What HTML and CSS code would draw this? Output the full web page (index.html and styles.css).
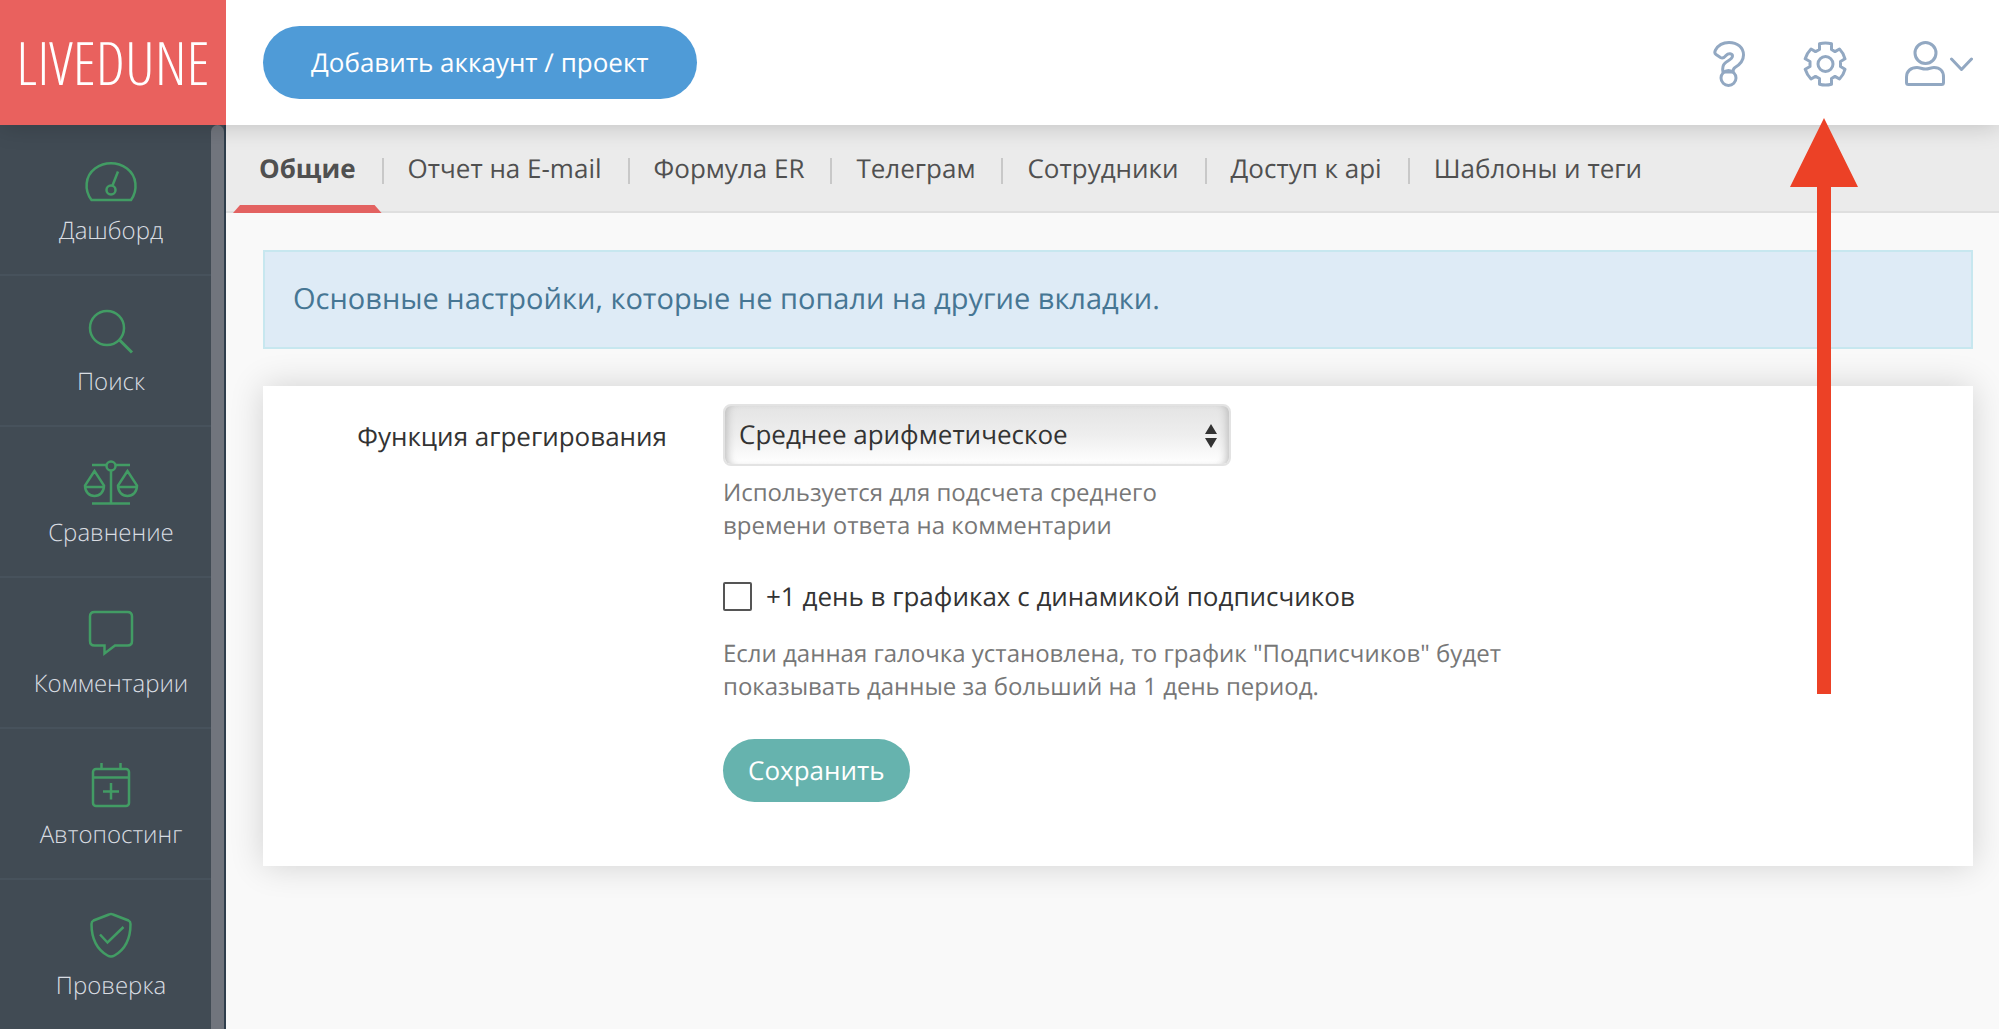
FILE: index.html
```html
<!DOCTYPE html>
<html lang="ru">
<head>
<meta charset="utf-8">
<meta name="viewport" content="width=device-width, initial-scale=1">
<title>LiveDune — Настройки</title>
<link rel="stylesheet" href="styles.css">
</head>
<body>
<div class="app">
  <header class="header">
    <a class="logo" href="#">LIVEDUNE</a>
    <button class="btn btn-add" type="button">Добавить аккаунт / проект</button>
    <nav class="tools" aria-label="Профиль">
      <a class="tool" href="#" aria-label="Помощь">
        <svg width="32" height="46" viewBox="0 0 32 46"><path d="M2.500 9C5 4.500 10 1.500 16 1.500C24.500 1.500 30.500 6.500 30.500 14C30.500 20 27 23.500 22 26.500C20.500 27.500 20 28.500 20 31H10C9 26 10.500 22.500 14 20.500C17.500 18.500 19.500 17.500 19.500 15C19.500 12.500 15.500 11.500 13 14.500C11 17 9.500 17.500 7.500 16.500L3 13.500C1.500 12.500 1.500 11 2.500 9Z"/><circle cx="15.500" cy="37" r="7.500"/></svg>
      </a>
      <a class="tool" href="#" aria-label="Настройки">
        <svg width="44" height="46" viewBox="0 0 44 46"><path d="M16.500 2.800Q22.500 1.200 28.500 2.800V8.500L32 10.600L36.500 8Q40.500 12 42 17.800L37.500 20.500V25.500L42 28.300Q40.500 34 36.500 38L32 35.400L28.500 37.500V43.200Q22.500 44.800 16.500 43.200V37.500L12.500 35.400L8 38Q4 34 2.200 28.300L7 25.500V20.500L2.200 17.800Q4 12 8 8L12.500 10.600L16.500 8.500Z"/><circle cx="22.500" cy="23" r="7.500"/></svg>
      </a>
      <a class="tool" href="#" aria-label="Аккаунт">
        <svg width="68" height="46" viewBox="0 0 68 46"><circle cx="20.500" cy="12" r="10.500"/><path d="M1.500 41.500V36C1.500 30 6 26.500 12 26.500C15 26.500 17 28 20.500 28C24 28 26 26.500 29 26.500C35 26.500 38.500 30 38.500 36V41.500Q38.500 43.500 36.500 43.500H3.500Q1.500 43.500 1.500 41.500Z"/><path d="M46.500 18L56.500 28.500L66.500 18"/></svg>
      </a>
    </nav>
  </header>

  <aside class="sidebar">
    <nav class="menu" aria-label="Разделы">
      <a class="menu-item" href="#">
        <svg class="menu-icon" viewBox="0 0 56 48"><path d="M8.500 43C1 33 2 19 12 11.500C22 4.500 34 4.500 44 11.500C54 19 55 33 48 43Z"/><circle cx="28" cy="33" r="4.500"/><path d="M29.500 28.500L35 14.500"/></svg>
        Дашборд
      </a>
      <a class="menu-item" href="#">
        <svg class="menu-icon" viewBox="0 0 56 48"><circle cx="24" cy="20" r="17"/><path d="M36.500 32L49 44.500" stroke-width="3"/></svg>
        Поиск
      </a>
      <a class="menu-item" href="#">
        <svg class="menu-icon" viewBox="0 0 56 48"><path d="M9 6H24M32 6H47M9 44.500H47M28 12V44"/><circle cx="28" cy="7" r="4.500"/><path d="M11.500 12L2 26.500C2 33 6 37 11.500 37S21 33 21 26.500ZM2 28H21M44.500 12L35 26.500C35 33 39 37 44.500 37S54 33 54 26.500ZM35 28H54"/></svg>
        Сравнение
      </a>
      <a class="menu-item" href="#">
        <svg class="menu-icon" viewBox="0 0 56 48"><path d="M11.500 2H44.500Q49 2 49 6.500V31Q49 35.500 44.500 35.500H32L21.500 43.500V35.500H11.500Q7 35.500 7 31V6.500Q7 2 11.500 2Z"/></svg>
        Комментарии
      </a>
      <a class="menu-item" href="#">
        <svg class="menu-icon" viewBox="0 0 56 48"><rect x="10" y="8" width="36" height="37" rx="3"/><path d="M10 16.500H46M18.500 2V8M37.500 2V8M28 22V38.500M20 30.500H36"/></svg>
        Автопостинг
      </a>
      <a class="menu-item" href="#">
        <svg class="menu-icon" viewBox="0 0 56 48"><path d="M26 2.500Q28 1.500 30 2.500L45.500 8.500Q47.500 9.500 47.500 12C47.500 27 42 37.500 31.500 43.500Q28 45.500 24.500 43.500C14 37.500 8.500 27 8.500 12Q8.500 9.500 10.500 8.500Z"/><path d="M17 22.500L24.500 30.500L40.500 15"/></svg>
        Проверка
      </a>
    </nav>
    <div class="scroll-thumb"></div>
  </aside>

  <main class="content">
    <nav class="tabs" aria-label="Настройки">
      <a class="tab tab-active" href="#">Общие</a>
      <a class="tab" href="#">Отчет на E-mail</a>
      <a class="tab" href="#">Формула ER</a>
      <a class="tab" href="#">Телеграм</a>
      <a class="tab" href="#">Сотрудники</a>
      <a class="tab" href="#">Доступ к api</a>
      <a class="tab" href="#">Шаблоны и теги</a>
    </nav>

    <div class="page">
      <p class="notice">Основные настройки, которые не попали на другие вкладки.</p>

      <form class="card">
        <label class="field-label" for="aggregate">Функция агрегирования</label>
        <div class="fields">
          <div class="select-wrap">
            <select class="select" id="aggregate">
              <option>Среднее арифметическое</option>
            </select>
            <svg class="select-arrows" width="12" height="24" viewBox="0 0 12 24"><path d="M6 0L12 10H0ZM0 14H12L6 24Z"/></svg>
          </div>
          <p class="hint">Используется для подсчета среднего<br>времени ответа на комментарии</p>
          <div class="check">
            <input class="checkbox" type="checkbox" id="plus-day">
            <label for="plus-day">+1 день в графиках с динамикой подписчиков</label>
          </div>
          <p class="hint">Если данная галочка установлена, то график "Подписчиков" будет<br>показывать данные за больший на 1 день период.</p>
          <button class="btn btn-save" type="submit">Сохранить</button>
        </div>
      </form>
    </div>
  </main>

  <svg class="pointer" width="70" height="576" viewBox="0 0 70 576" aria-hidden="true"><path d="M35 0L69 69H42V576H28V69H1Z"/></svg>
</div>
</body>
</html>
```
FILE: styles.css
```css
* {
  box-sizing: border-box;
}

body {
  margin: 0;
  background: #f9f9f9;
  color: #333;
  font-family: "Open Sans", "Noto Sans", sans-serif;
  font-size: 26px;
  line-height: 36px;
  text-rendering: geometricPrecision;
}

a {
  color: inherit;
  text-decoration: none;
}

p {
  margin: 0;
}

svg {
  display: block;
}

.app {
  position: relative;
  display: grid;
  grid-template-columns: 226px 1fr;
  grid-template-rows: auto 1fr;
  height: 100vh;
  overflow: hidden;
}

/* Header */
.header {
  grid-column: 1 / -1;
  z-index: 1;
  display: flex;
  align-items: center;
  padding-right: 26px;
  background: #fff;
  box-shadow: 0 0 24px rgba(0, 0, 0, 0.2);
}

.logo {
  width: 226px;
  height: 125px;
  background: #e9615e;
  color: #fff;
  font-family: "Open Sans Condensed Light", "Open Sans Light Condensed", "Liberation Sans Narrow", "Open Sans", sans-serif;
  font-weight: 300;
  font-size: 60px;
  line-height: 125px;
  text-align: center;
}

.btn {
  border: 0;
  border-radius: 37px;
  color: #fff;
  font: inherit;
  text-rendering: inherit;
  white-space: nowrap;
}

.btn-add {
  margin-left: 37px;
  padding: 18px 48px 19px;
  background: #4f9bd7;
}

.tools {
  display: flex;
  gap: 58px;
  margin-left: auto;
  padding-top: 2px;
}

.tool svg {
  fill: none;
  stroke: #92a8c2;
  stroke-width: 3;
  stroke-linejoin: round;
  stroke-linecap: round;
}

/* Sidebar */
.sidebar {
  position: relative;
  background: #414b54;
  border-right: 2px solid #2f3e4c;
  overflow: hidden;
}

.menu-item {
  display: flex;
  flex-direction: column;
  align-items: center;
  gap: 10px;
  padding: 32px 2px 27px 0;
  border-bottom: 2px solid #47525c;
  color: #d9dde2;
  font-weight: 300;
  font-size: 24px;
  line-height: 32px;
}

.menu-icon {
  width: 56px;
  height: 48px;
  fill: none;
  stroke: #429c64;
  stroke-width: 2.5;
}

.scroll-thumb {
  position: absolute;
  top: 0;
  right: 0;
  bottom: 0;
  width: 13px;
  border-radius: 7px 7px 0 0;
  background: #71757d;
}

/* Tabs */
.tabs {
  display: flex;
  padding-left: 7px;
  background: #ebebeb;
  border-bottom: 2px solid #dfdfdf;
}

.tab {
  position: relative;
  padding: 25px 26px;
  color: #505050;
  white-space: nowrap;
}

.tab + .tab {
  background: linear-gradient(#c8c8c8, #c8c8c8) 0 33px / 2px 26px no-repeat;
}

.tab-active {
  font-weight: 700;
}

.tab-active::after {
  content: "";
  position: absolute;
  left: 0;
  right: 0;
  bottom: -2px;
  height: 8px;
  background: #e36261;
  clip-path: polygon(7px 0, calc(100% - 7px) 0, 100% 100%, 0 100%);
}

/* Page */
.page {
  display: grid;
  gap: 37px;
  padding: 37px 26px 37px 37px;
}

.notice {
  padding: 28px 28px 30px;
  border: 2px solid #c7e7ef;
  background: #deebf6;
  color: #467694;
  font-size: 29px;
  line-height: 37px;
}

.card {
  display: grid;
  grid-template-columns: 404px 1fr;
  gap: 56px;
  padding: 18px 0 64px;
  background: #fff;
  box-shadow: 0 0 32px rgba(0, 0, 0, 0.16);
}

.field-label {
  padding-top: 14px;
  text-align: right;
}

.fields {
  display: flex;
  flex-direction: column;
  align-items: flex-start;
}

.select-wrap {
  position: relative;
  width: 508px;
}

.select {
  appearance: none;
  display: block;
  width: 100%;
  height: 62px;
  padding: 0 14px 2px;
  border: 2px solid #e3e3e3;
  border-radius: 8px;
  background: linear-gradient(#e4e4e4, #eee 50%, #fff);
  box-shadow: inset 8px 0 8px -6px #bbb, inset -8px 0 8px -6px #bbb;
  color: #333;
  font: inherit;
  text-rendering: inherit;
}

.select-arrows {
  position: absolute;
  top: 20px;
  right: 14px;
  fill: #333;
  pointer-events: none;
}

.hint {
  padding-top: 10px;
  color: #777;
  font-size: 24px;
  line-height: 33px;
}

.check {
  display: flex;
  align-items: center;
  gap: 14px;
  padding: 36px 0 13px;
}

.checkbox {
  appearance: none;
  width: 29px;
  height: 29px;
  margin: 0;
  border: 2px solid #555;
  border-radius: 2px;
  background: #fff;
}

.btn-save {
  margin-top: 36px;
  padding: 13px 25px 14px;
  background: #66b3ae;
}

/* Red arrow that points at the settings icon */
.pointer {
  position: absolute;
  top: 118px;
  right: 140px;
  z-index: 2;
  fill: #ec4126;
}
```
